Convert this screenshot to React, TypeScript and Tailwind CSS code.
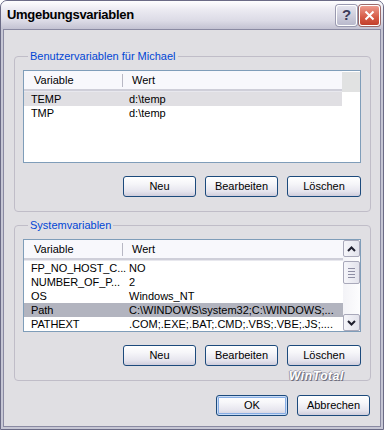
import React from 'react'
import clsx from 'clsx'

const userVars = [
  ['TEMP', 'd:\\temp'],
  ['TMP', 'd:\\temp'],
]

const sysVars = [
  ['FP_NO_HOST_C...', 'NO'],
  ['NUMBER_OF_P...', '2'],
  ['OS', 'Windows_NT'],
  ['Path', 'C:\\WINDOWS\\system32;C:\\WINDOWS;...'],
  ['PATHEXT', '.COM;.EXE;.BAT;.CMD;.VBS;.VBE;.JS;....'],
]

function Btn({ children, def, className }: { children: React.ReactNode; def?: boolean; className?: string }) {
  return (
    <button
      className={clsx(
        'h-[21px] rounded-[3px] border border-[#1c4a7c] text-[11px] leading-none text-black bg-[linear-gradient(#ffffff,#f6f6f9_35%,#e6e5ee_75%,#cfcddc)]',
        def && 'shadow-[inset_0_0_0_1px_#c9dcf7,inset_0_0_0_2px_#88aee4]',
        className
      )}
    >
      {children}
    </button>
  )
}

function Chevron({ up }: { up?: boolean }) {
  return (
    <svg width="9" height="6" viewBox="0 0 9 6">
      <path d={up ? 'M1 5 L4.5 1.5 L8 5' : 'M1 1 L4.5 4.5 L8 1'} fill="none" stroke="#1f1f2e" strokeWidth="2" />
    </svg>
  )
}

function ScrollBox({ children, className }: { children?: React.ReactNode; className?: string }) {
  return (
    <div
      className={clsx(
        'flex items-center justify-center rounded-[2px] border border-[#a9a9ba] bg-[linear-gradient(90deg,#f6f6fa,#e3e3ec)]',
        className
      )}
    >
      {children}
    </div>
  )
}

function ListView({ rows, selected, focused, scroll }: { rows: string[][]; selected: number; focused?: boolean; scroll?: boolean }) {
  return (
    <div className="flex h-[93px] border border-[#7f9db9] bg-white">
      <div className="flex flex-1 flex-col overflow-hidden">
        <div className="flex h-[20px] items-center border-b-2 border-[#cfcfd9] bg-[#f8f8fc] text-[11px] shadow-[0_1px_0_#e8e8ee]">
          <div className="flex w-[99px] items-center">
            <span className="flex-1 pl-[10px]">Variable</span>
            <span className="h-[13px] w-px bg-[#b8b8c4]" />
          </div>
          <span className="pl-[9px]">Wert</span>
        </div>
        <div className="pt-[1px]">
          {rows.map((r, i) => (
            <div
              key={r[0]}
              className={clsx(
                'flex h-[14px] items-center overflow-hidden text-[11px] whitespace-nowrap',
                i === selected && (focused ? 'bg-[#b2b4bf]' : 'bg-[#e0dfe3]')
              )}
            >
              <span className="w-[99px] shrink-0 pl-[7px] tracking-[-0.1px]">{r[0]}</span>
              <span className="pl-[6px]">{r[1]}</span>
            </div>
          ))}
        </div>
      </div>
      {scroll ? (
        <div className="flex w-[17px] flex-col bg-[linear-gradient(90deg,#f3f3f7,#fdfdfe)]">
          <ScrollBox className="h-[17px]">
            <Chevron up />
          </ScrollBox>
          <ScrollBox className="mt-[4px] h-[23px] flex-col gap-[2px]">
            <span className="h-px w-[7px] bg-[#8e8ea4]" />
            <span className="h-px w-[7px] bg-[#8e8ea4]" />
            <span className="h-px w-[7px] bg-[#8e8ea4]" />
            <span className="h-px w-[7px] bg-[#8e8ea4]" />
          </ScrollBox>
          <div className="flex-1" />
          <ScrollBox className="h-[17px]">
            <Chevron />
          </ScrollBox>
        </div>
      ) : (
        <div className="w-[18px]">
          <div className="mt-[1px] h-[20px] bg-[#e1e2e2]" />
        </div>
      )}
    </div>
  )
}

function Group({ title, children, className }: { title: string; children: React.ReactNode; className?: string }) {
  return (
    <fieldset className={clsx('rounded-[4px] border border-[#c0bdc8] pr-[9px] pb-[14px] pl-[8px]', className)}>
      <legend className="ml-[5px] px-[2px] text-[11px] leading-[13px] text-[#0046d5]">{title}</legend>
      {children}
    </fieldset>
  )
}

export default function App() {
  return (
    <div className="h-[430px] w-[384px] font-['Liberation_Sans',Arial,sans-serif] text-black">
      <div className="flex h-full flex-col overflow-hidden rounded-t-[7px] border border-[#6b6b86] bg-[#c6c6d4]">
        <div className="flex h-[28px] shrink-0 items-center bg-[linear-gradient(#fefeff,#ecebf2_30%,#dcdbe6_70%,#c3c2d2)] pr-[3px] pl-[6px]">
          <span className="flex-1 text-[13px] font-bold tracking-[-0.3px] text-black">Umgebungsvariablen</span>
          <div className="flex h-[21px] w-[21px] items-center justify-center rounded-[3px] border border-white bg-[linear-gradient(#e4e4ee,#b9b9cc)] shadow-[0_0_0_1px_#9a9ab0] text-[15px] font-bold text-[#3c3c5a]">
            ?
          </div>
          <div className="ml-[2px] flex h-[21px] w-[21px] items-center justify-center rounded-[3px] border border-white bg-[linear-gradient(#ec9a8c,#d65a45_60%,#c2402c)] shadow-[0_0_0_1px_#9a6a6a]">
            <svg width="11" height="11" viewBox="0 0 11 11">
              <path d="M1.5 1.5 L9.5 9.5 M9.5 1.5 L1.5 9.5" stroke="white" strokeWidth="2" />
            </svg>
          </div>
        </div>
        <div className="relative mx-[2px] mb-[2px] flex flex-1 flex-col border border-[#8a8aa2] bg-[#e0dfe3] pt-[20px] pr-[9px] pl-[10px]">
          <Group title="Benutzervariablen für Michael">
            <div className="mt-[7px]">
              <ListView rows={userVars} selected={0} />
            </div>
            <div className="mt-[13px] flex justify-end gap-[9px]">
              <Btn className="w-[73px]">Neu</Btn>
              <Btn className="w-[73px]">Bearbeiten</Btn>
              <Btn className="w-[74px]">Löschen</Btn>
            </div>
          </Group>
          <Group title="Systemvariablen" className="mt-[7px]">
            <div className="mt-[7px]">
              <ListView rows={sysVars} selected={3} focused scroll />
            </div>
            <div className="mt-[13px] flex justify-end gap-[9px]">
              <Btn className="w-[73px]">Neu</Btn>
              <Btn className="w-[73px]">Bearbeiten</Btn>
              <Btn className="w-[74px]">Löschen</Btn>
            </div>
          </Group>
          <div className="mt-[14px] flex justify-end gap-[9px] pr-[1px]">
            <Btn def className="w-[72px]">OK</Btn>
            <Btn className="w-[73px]">Abbrechen</Btn>
          </div>
          <span className="absolute top-[337px] left-[285px] text-[12px] font-bold italic tracking-[0.6px] text-white [text-shadow:1px_1px_0_#6e6e7c,-1px_0_0_#9a9aa8,0_-1px_0_#b0b0bc]">
            WinTotal
          </span>
        </div>
      </div>
    </div>
  )
}
